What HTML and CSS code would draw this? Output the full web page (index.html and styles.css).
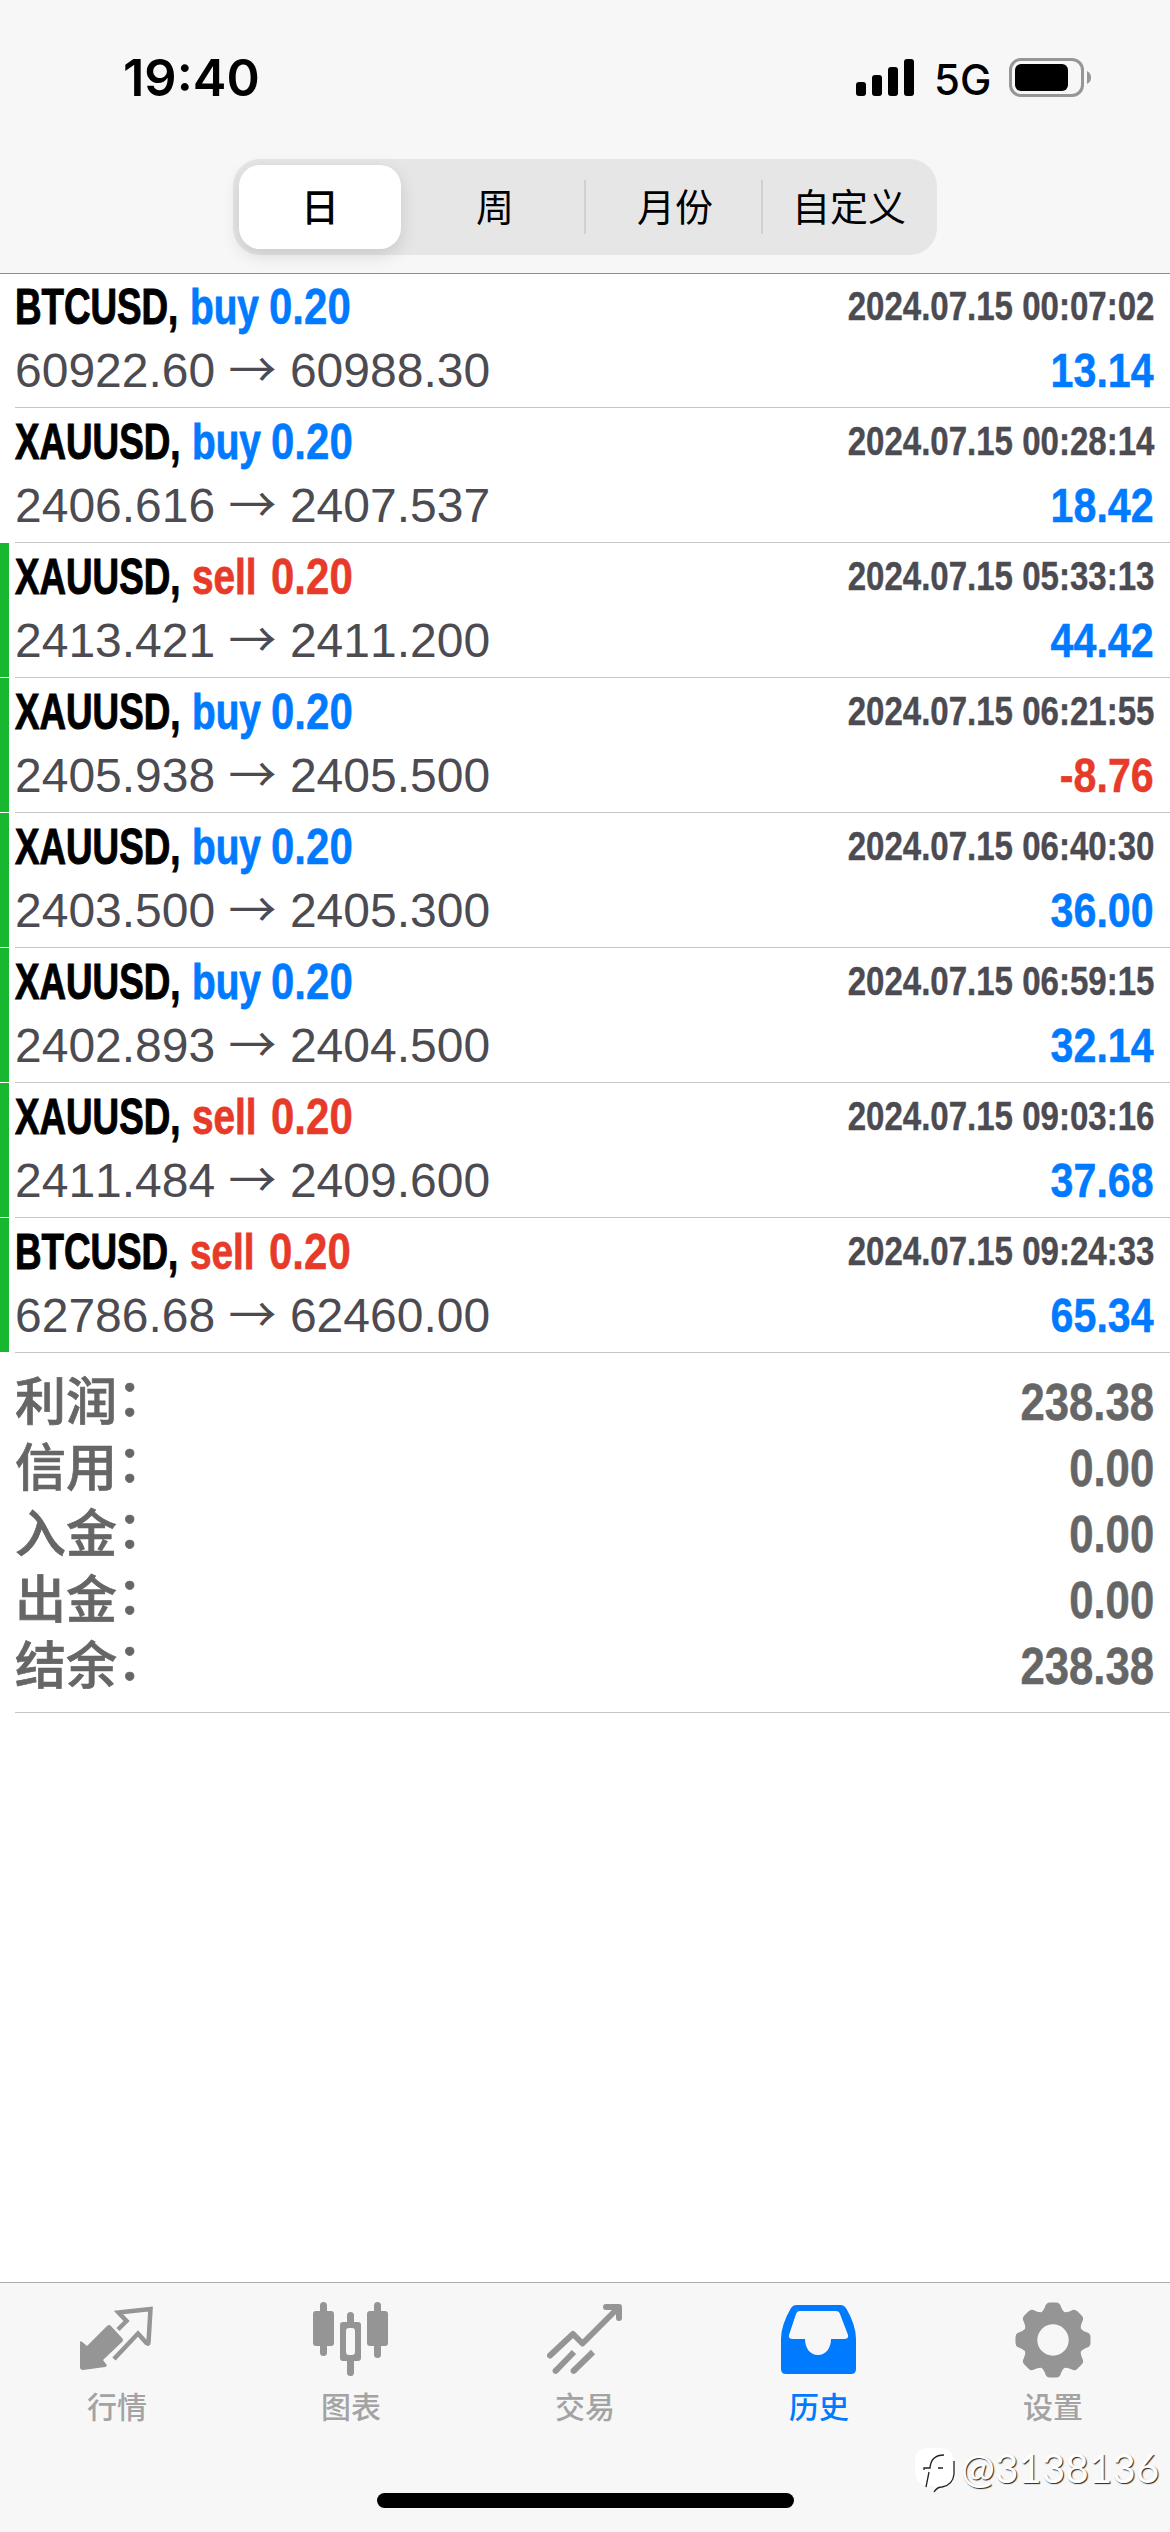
FILE: index.html
```html
<!DOCTYPE html>
<html lang="zh-CN">
<head>
<meta charset="utf-8">
<title>历史</title>
<link rel="stylesheet" href="styles.css">
</head>
<body>
<div class="screen">
  <header class="header">
    <div class="status">
      <span class="time">19:40</span>
      <span class="status-right">
        <svg class="signal" width="58" height="37" viewBox="0 0 58 37"><rect x="0" y="23" width="10" height="14" rx="3"/><rect x="16" y="16" width="10" height="21" rx="3"/><rect x="32" y="8" width="10" height="29" rx="3"/><rect x="48" y="0" width="10" height="37" rx="3"/></svg>
        <span class="network">5G</span>
        <svg class="battery" width="83" height="39" viewBox="0 0 83 39"><rect x="1.5" y="1.5" width="72" height="36" rx="10.5" fill="none" stroke="#969696" stroke-width="3"/><rect x="6" y="6" width="53" height="27" rx="6"/><path d="M78 13q4 2 4 6.500t-4 6.500z" fill="#969696"/></svg>
      </span>
    </div>
    <nav class="segments">
      <span class="segment active">日</span>
      <span class="segment">周</span>
      <span class="segment divided">月份</span>
      <span class="segment divided">自定义</span>
    </nav>
  </header>

  <main class="content">
    <ul class="deals">
      <li class="deal">
        <div class="line"><span class="symbol btc">BTCUSD,</span><span class="side buy">buy</span><span class="volume buy">0.20</span><span class="date">2024.07.15 00:07:02</span></div>
        <div class="line second"><span class="prices">60922.60 <i class="arrow">→</i> 60988.30</span><span class="profit buy">13.14</span></div>
      </li>
      <li class="deal">
        <div class="line"><span class="symbol">XAUUSD,</span><span class="side buy">buy</span><span class="volume buy">0.20</span><span class="date">2024.07.15 00:28:14</span></div>
        <div class="line second"><span class="prices">2406.616 <i class="arrow">→</i> 2407.537</span><span class="profit buy">18.42</span></div>
      </li>
      <li class="deal marked">
        <div class="line"><span class="symbol">XAUUSD,</span><span class="side sell">sell</span><span class="volume sell">0.20</span><span class="date">2024.07.15 05:33:13</span></div>
        <div class="line second"><span class="prices">2413.421 <i class="arrow">→</i> 2411.200</span><span class="profit buy">44.42</span></div>
      </li>
      <li class="deal marked">
        <div class="line"><span class="symbol">XAUUSD,</span><span class="side buy">buy</span><span class="volume buy">0.20</span><span class="date">2024.07.15 06:21:55</span></div>
        <div class="line second"><span class="prices">2405.938 <i class="arrow">→</i> 2405.500</span><span class="profit sell">-8.76</span></div>
      </li>
      <li class="deal marked">
        <div class="line"><span class="symbol">XAUUSD,</span><span class="side buy">buy</span><span class="volume buy">0.20</span><span class="date">2024.07.15 06:40:30</span></div>
        <div class="line second"><span class="prices">2403.500 <i class="arrow">→</i> 2405.300</span><span class="profit buy">36.00</span></div>
      </li>
      <li class="deal marked">
        <div class="line"><span class="symbol">XAUUSD,</span><span class="side buy">buy</span><span class="volume buy">0.20</span><span class="date">2024.07.15 06:59:15</span></div>
        <div class="line second"><span class="prices">2402.893 <i class="arrow">→</i> 2404.500</span><span class="profit buy">32.14</span></div>
      </li>
      <li class="deal marked">
        <div class="line"><span class="symbol">XAUUSD,</span><span class="side sell">sell</span><span class="volume sell">0.20</span><span class="date">2024.07.15 09:03:16</span></div>
        <div class="line second"><span class="prices">2411.484 <i class="arrow">→</i> 2409.600</span><span class="profit buy">37.68</span></div>
      </li>
      <li class="deal marked">
        <div class="line"><span class="symbol btc">BTCUSD,</span><span class="side sell">sell</span><span class="volume sell">0.20</span><span class="date">2024.07.15 09:24:33</span></div>
        <div class="line second"><span class="prices">62786.68 <i class="arrow">→</i> 62460.00</span><span class="profit buy">65.34</span></div>
      </li>
    </ul>
    <dl class="summary">
      <div class="total"><dt>利润<span class="colon">：</span></dt><dd>238.38</dd></div>
      <div class="total"><dt>信用<span class="colon">：</span></dt><dd>0.00</dd></div>
      <div class="total"><dt>入金<span class="colon">：</span></dt><dd>0.00</dd></div>
      <div class="total"><dt>出金<span class="colon">：</span></dt><dd>0.00</dd></div>
      <div class="total"><dt>结余<span class="colon">：</span></dt><dd>238.38</dd></div>
    </dl>
  </main>

  <footer class="tabbar">
    <nav class="tabs">
      <a class="tab">
        <svg width="76" height="76" viewBox="0 0 76 76"><path d="M4.500 41q-3-3-3.500-1V65q0 3 3 3l22-3q3-1 1-3l-3-4L43 40q2-2 0-4L32 24q-2-2-4 0L8 44z"/><path d="M39 27.500l8.500-8.500-8-8.500 32-3.500-2 33.500q0 2-2 .5l-8.500-9.500L35 57" fill="none" stroke="currentColor" stroke-width="4.500"/></svg>
        <span>行情</span>
      </a>
      <a class="tab">
        <svg width="76" height="76" viewBox="0 0 76 76"><rect x="0" y="9" width="21" height="35" rx="3"/><rect x="7" y="0" width="7" height="54" rx="3.500"/><rect x="54" y="9" width="21" height="35" rx="3"/><rect x="61" y="0" width="7" height="56" rx="3.500"/><path fill-rule="evenodd" d="M30 20h4V13.500a3.500 3.500 0 0 1 7 0V20h4q3 0 3 3V56q0 3-3 3h-4V70.500a3.500 3.500 0 0 1-7 0V59h-4q-3 0-3-3V23q0-3 3-3zm6 6q-3 0-3 3V50q0 3 3 3h3q3 0 3-3V29q0-3-3-3z"/></svg>
        <span>图表</span>
      </a>
      <a class="tab">
        <svg width="76" height="76" viewBox="0 0 76 76" stroke="currentColor" stroke-width="6"><g fill="none"><path d="M3 53.500L26 32l9.500 9.500L71 6" stroke-linecap="round" stroke-linejoin="round"/><path d="M59 5h13v11" stroke-linecap="round" stroke-linejoin="round"/><path d="M27 50L8.500 69M46 50L26.500 69"/><path d="M9 68.500l-.4.400M27 68.500l-.4.400" stroke-linecap="round"/></g></svg>
        <span>交易</span>
      </a>
      <a class="tab current">
        <svg width="76" height="76" viewBox="0 0 76 76"><path fill-rule="evenodd" d="M15 3H60q3 0 5 3Q75 23 75 37V67q0 5-5 5H5q-5 0-5-5V37Q0 23 10 6q2-3 5-3zm4 6q-3 0-4 3L8 33q-1 4 4 4H24C24 46 29 53 37 53S50 46 50 37H63q5 0 4-4L59 12q-1-3-4-3z"/></svg>
        <span>历史</span>
      </a>
      <a class="tab">
        <svg width="76" height="76" viewBox="-38 -38 76 76"><defs><path id="tooth" d="M-14-26Q-10-28-8-33Q-7-37.500-3-37.500H3Q7-37.500 8-33Q10-28 14-26L12-14H-12z"/></defs><circle r="21.500" fill="none" stroke="currentColor" stroke-width="12"/><use href="#tooth"/><use href="#tooth" transform="rotate(45)"/><use href="#tooth" transform="rotate(90)"/><use href="#tooth" transform="rotate(135)"/><use href="#tooth" transform="rotate(180)"/><use href="#tooth" transform="rotate(225)"/><use href="#tooth" transform="rotate(270)"/><use href="#tooth" transform="rotate(315)"/><circle r="15.700" fill="#f7f7f7"/></svg>
        <span>设置</span>
      </a>
    </nav>
    <div class="home"></div>
    <div class="watermark">
      <svg width="42" height="46" viewBox="0 0 42 46"><path d="M14 1H26Q40 1 40 16V26Q40 38 29 40Q23 41 20 45L21 39 12 39Q1 36 1 25V15Q1 1 14 1z" fill="#fff"/><path d="M40 14V27Q39 38 28 40Q23 40 20 45M12 40L15 25M10 23V21H16Q17 8 30 8M24 21H29" fill="none" stroke="#222" stroke-width="1.300"/></svg>
      <span>@3138136</span>
    </div>
  </footer>
</div>
</body>
</html>
```
FILE: styles.css
```css
* { box-sizing: border-box; }
body { margin: 0; background: #fff; font-family: "Liberation Sans", "Noto Sans CJK SC", sans-serif; }
ul, dl, dd { margin: 0; padding: 0; list-style: none; }

.screen { width: 1170px; height: 2532px; display: flex; flex-direction: column; background: #fff; overflow: hidden; }

.header { height: 274px; margin-bottom: -1px; background: #f7f7f7; border-bottom: 1px solid #8c8c8c; position: relative; }
.status { height: 159px; display: flex; justify-content: space-between; align-items: flex-start; padding: 46px 78px 0 123px; font-family: Inter, sans-serif; }
.time { margin-top: 1px; font-size: 50.5px; line-height: 62px; font-weight: 600; }
.status-right { display: flex; align-items: center; height: 63px; }
.network { width: 54px; margin: 4px 21px 0 20px; font-size: 42px; line-height: 50px; font-weight: 500; white-space: nowrap; }

.segments { width: 704px; height: 96px; margin: 0 auto; padding: 6px 0 6px 6px; display: grid; grid-template-columns: 162px 183px 177px 176px; background: #e6e6e7; border-radius: 27px; font-family: "Noto Sans CJK SC", sans-serif; font-size: 38px; }
.segment { display: flex; align-items: center; justify-content: center; height: 84px; padding: 0 0 6px 5px; }
.active { padding-left: 0; background: #fff; border-radius: 21px; box-shadow: 0 6px 18px rgba(0,0,0,.13); font-weight: 500; }
.divided { background: linear-gradient(#d0d0d3, #d0d0d3) left center / 2px 54px no-repeat; }
.segment:last-child { padding-left: 0; }

.content { flex: 1; }
.deal { height: 135px; padding: 0 16px 0 15px; background: linear-gradient(#c6c6c8, #c6c6c8) 15px 100% / 100% 1px no-repeat; }
.marked { background: linear-gradient(#17b82f, #17b82f) 0 0 / 9px 134px no-repeat, linear-gradient(#c6c6c8, #c6c6c8) 15px 100% / 100% 1px no-repeat; }
.line { display: flex; align-items: baseline; height: 68px; line-height: 69px; font-size: 50px; font-weight: bold; white-space: nowrap; font-kerning: none; }
.second { height: 64px; line-height: 59px; }
.symbol { width: 177px; transform: scaleX(.735); transform-origin: 0 0; -webkit-text-stroke: 1px; }
.btc { width: 175px; }
.side { width: 79px; transform: scaleX(.775); transform-origin: 0 0; -webkit-text-stroke: .8px; }
.volume { width: 84px; transform: scaleX(.84); transform-origin: 0 0; -webkit-text-stroke: .5px; }
.buy { color: #007aff; }
.sell { color: #e73a29; }
.date { margin-left: auto; font-size: 40px; color: #4c4b51; transform: scaleX(.826) translateY(-4px); transform-origin: 100% 0; -webkit-text-stroke: .4px; }
.prices { font-size: 48px; font-weight: normal; color: #4c4b51; }
.arrow { font: normal 48px/1 "Noto Sans CJK SC", sans-serif; }
.profit { margin-left: auto; font-size: 49px; transform: scaleX(.84); transform-origin: 100% 0; -webkit-text-stroke: .5px; }

.summary { height: 360px; padding: 16px 16px 0 15px; background: linear-gradient(#c6c6c8, #c6c6c8) 15px 100% / 100% 1px no-repeat; color: #666; }
.total { height: 66px; display: flex; justify-content: space-between; align-items: baseline; line-height: 66px; }
.total dt { font-size: 51px; font-weight: 500; -webkit-text-stroke: .7px; }
.colon { display: inline-block; transform: translateY(-4px); }
.total dd { font-size: 52px; font-weight: bold; transform: scaleX(.84); transform-origin: 100% 0; -webkit-text-stroke: .5px; }

.tabbar { height: 250px; background: #f7f7f7; border-top: 1px solid #acacac; position: relative; }
.tabs { display: grid; grid-template-columns: repeat(5, 1fr); }
.tab { display: flex; flex-direction: column; align-items: center; padding-top: 19px; color: #959595; font: 500 30px/44px "Noto Sans CJK SC", sans-serif; }
.tab svg { fill: currentColor; }
.tab span { margin-top: 5px; color: #a3a3a3; }
.tab.current, .tab.current span { color: #007aff; }
.home { position: absolute; left: 377px; top: 210px; width: 417px; height: 15px; border-radius: 8px; background: #000; }
.watermark { position: absolute; left: 914px; top: 164px; display: flex; align-items: center; gap: 5px; color: #fff; font: 400 40.5px/46px Lato, sans-serif; text-shadow: 1px 1px 1px #222; }
.watermark span { margin-top: -4px; }
```
